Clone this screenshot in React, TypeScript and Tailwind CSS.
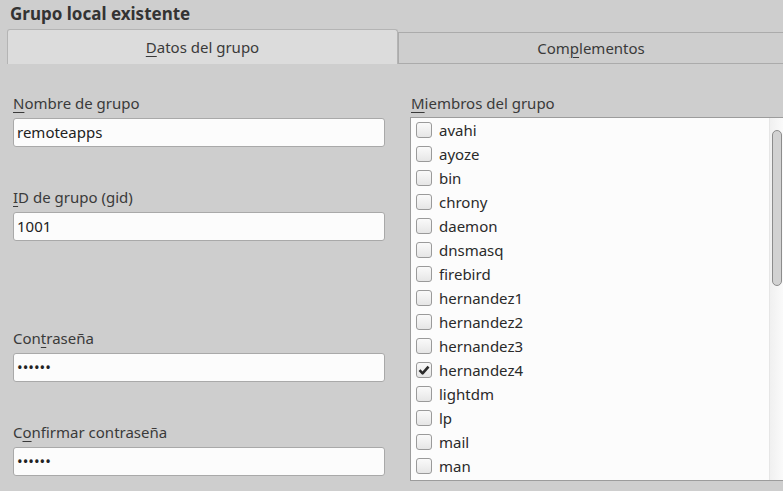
import { useState } from 'react'

// ── Data ─────────────────────────────────────────────────────────────────────
const members = [
  'avahi', 'ayoze', 'bin', 'chrony', 'daemon', 'dnsmasq', 'firebird',
  'hernandez1', 'hernandez2', 'hernandez3', 'hernandez4', 'lightdm', 'lp', 'mail', 'man',
]

// Label with a keyboard mnemonic (underlined letter)
function Mnemonic({ before, letter, after }: { before?: string; letter: string; after: string }) {
  return (
    <>
      {before}
      <span className="underline decoration-1 underline-offset-[3px]">{letter}</span>
      {after}
    </>
  )
}

function Field({ label, value }: { label: React.ReactNode; value: string }) {
  return (
    <div>
      <div className="h-[22px] text-[15px] leading-[22px] text-[#3a3a3a]">{label}</div>
      <div className="mt-[4px] h-[29px] rounded-[3px] border border-[#a9a9a9] bg-[#fcfcfc] px-[3px] text-[15px] leading-[27px] text-[#222]">
        {value}
      </div>
    </div>
  )
}

function Checkbox({ checked }: { checked: boolean }) {
  return (
    <span className="flex h-[16px] w-[16px] shrink-0 items-center justify-center rounded-[3px] border border-[#9a9a9a] bg-gradient-to-b from-[#fafafa] to-[#e6e6e6]">
      {checked && (
        <svg width="12" height="12" viewBox="0 0 12 12">
          <path d="M1.5 6.2 L4.6 9.3 L10.5 2.6" fill="none" stroke="#2b2b2b" strokeWidth="2.6" strokeLinejoin="round" />
        </svg>
      )}
    </span>
  )
}

// ── App ──────────────────────────────────────────────────────────────────────
export default function App() {
  const [tab, setTab] = useState<'datos' | 'comp'>('datos')
  const [checked, setChecked] = useState<string[]>(['hernandez4'])

  const toggle = (m: string) =>
    setChecked(prev => (prev.includes(m) ? prev.filter(x => x !== m) : [...prev, m]))

  return (
    <div className="h-[491px] w-[783px] overflow-hidden bg-[#cecece] font-['Noto_Sans',sans-serif]">
      <h1 className="px-[10px] pt-[3px] text-[17px] font-bold leading-[22px] text-[#333]">Grupo local existente</h1>

      {/* Tabs */}
      <div className="mt-[4px] flex h-[35px] pl-[7px]">
        <button
          onClick={() => setTab('datos')}
          className={`w-[391px] rounded-t-[3px] border-x border-t text-[15px] text-[#3a3a3a] ${
            tab === 'datos' ? 'border-[#b4b4b4] bg-[#dcdcdc]' : 'mt-[3px] border-b border-[#a9a9a9] bg-[#cecece]'
          }`}
        >
          <Mnemonic letter="D" after="atos del grupo" />
        </button>
        <button
          onClick={() => setTab('comp')}
          className={`flex-1 border-l border-t text-[15px] text-[#3a3a3a] ${
            tab === 'comp' ? 'rounded-t-[3px] border-[#b4b4b4] bg-[#dcdcdc]' : 'mt-[3px] border-b border-[#ababab] bg-[#cecece]'
          }`}
        >
          <Mnemonic before="Com" letter="p" after="lementos" />
        </button>
      </div>

      {/* Content */}
      <div className="flex gap-[25px] pl-[13px] pt-[28px]">
        <div className="flex w-[372px] flex-col">
          <Field label={<Mnemonic letter="N" after="ombre de grupo" />} value="remoteapps" />
          <div className="mt-[39px]">
            <Field label={<Mnemonic letter="I" after="D de grupo (gid)" />} value="1001" />
          </div>
          <div className="mt-[86px]">
            <Field label={<Mnemonic before="Con" letter="t" after="raseña" />} value="••••••" />
          </div>
          <div className="mt-[39px]">
            <Field label={<Mnemonic before="C" letter="o" after="nfirmar contraseña" />} value="••••••" />
          </div>
        </div>

        <div className="flex flex-1 flex-col">
          <div className="h-[22px] pl-[1px] text-[15px] leading-[22px] text-[#3a3a3a]">
            <Mnemonic letter="M" after="iembros del grupo" />
          </div>
          <div className="mt-[3px] flex h-[364px] border-y border-l border-[#9c9c9c] bg-[#fcfcfc]">
            <ul className="flex-1">
              {members.map(m => (
                <li
                  key={m}
                  onClick={() => toggle(m)}
                  className="flex h-[24px] cursor-default items-center gap-[7px] pl-[5px] text-[15px] text-[#2a2a2a]"
                >
                  <Checkbox checked={checked.includes(m)} />
                  <span>{m}</span>
                </li>
              ))}
            </ul>
            {/* Scrollbar */}
            <div className="w-[14px] border-l border-[#e6e6e6] bg-gradient-to-r from-[#f0f0f0] to-[#fafafa] pt-[12px]">
              <div className="mx-auto h-[156px] w-[10px] rounded-full border border-[#8c8c8c] bg-[#d2d2d2]" />
            </div>
          </div>
        </div>
      </div>
    </div>
  )
}
